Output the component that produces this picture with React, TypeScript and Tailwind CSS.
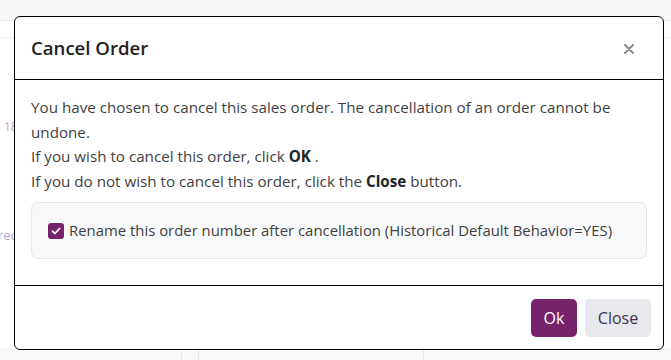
import React from "react";

export default function App() {
  return (
    <div
      className="relative w-[671px] h-[360px] overflow-hidden bg-white"
      style={{ fontFamily: "'Open Sans', Lato, sans-serif" }}
    >
      {/* faded page behind */}
      <div className="flex flex-col h-full">
        <div className="h-[21px] bg-[#f7f8f9] border-b border-[#ececec]" />
        <div className="h-[17px] border-b border-[#efefef]" />
        <div className="flex-1 relative">
          <div className="pt-[80px] pl-[4px] text-[12px] text-[#c7a3c2]">18</div>
          <div className="pt-[90px] -ml-[2px] text-[13px] text-[#b7a6cf]">rec</div>
        </div>
        <div className="h-[12px] bg-[#f8f9fa] flex">
          <div className="w-[182px] border-r border-[#e6e6e6]" />
          <div className="w-[17px] border-r border-[#e6e6e6]" />
          <div className="w-[225px] border-r border-[#e6e6e6]" />
        </div>
      </div>

      {/* modal */}
      <div className="absolute left-[14px] top-[16px] w-[650px] h-[334px] bg-white border border-black rounded-[6px] flex flex-col">
        <div className="h-[63px] border-b border-black flex items-center justify-between pl-[16px] pr-[29px]">
          <div className="text-[18.6px] font-semibold text-[#222]">Cancel Order</div>
          <svg width="10" height="10" viewBox="0 0 10 10" className="mt-[1px]">
            <path d="M1 1 L9 9 M9 1 L1 9" stroke="#8a8a8a" strokeWidth="2" strokeLinecap="round" />
          </svg>
        </div>
        <div className="h-[206px] border-b border-black pt-[15px] px-[16px] text-[15.2px] leading-[24.5px] text-[#3f3f3f]">
          <p>
            You have chosen to cancel this sales order. The cancellation of an order cannot be undone.
          </p>
          <p>
            If you wish to cancel this order, click <b className="font-bold text-[#222]">OK</b> .
          </p>
          <p>
            If you do not wish to cancel this order, click the <b className="font-bold text-[#222]">Close</b> button.
          </p>
          <div className="mt-[9px] h-[57px] bg-[#f8f9fb] border border-[#e6e7ea] rounded-[7px] flex items-center pl-[16px] gap-[5px]">
            <span className="w-[16px] h-[16px] rounded-[3px] bg-[#76236b] flex items-center justify-center shrink-0">
              <svg width="10" height="8" viewBox="0 0 10 8">
                <path d="M1.5 4.2 L4 6.5 L8.5 1.5" fill="none" stroke="white" strokeWidth="1.8" strokeLinecap="round" strokeLinejoin="round" />
              </svg>
            </span>
            <span className="text-[14.9px] text-[#3f3f3f] whitespace-nowrap">
              Rename this order number after cancellation (Historical Default Behavior=YES)
            </span>
          </div>
        </div>
        <div className="flex-1 flex items-center justify-end gap-[8px] pr-[12px]">
          <button className="w-[46px] h-[38px] rounded-[5px] bg-[#76236b] text-white text-[16px]">Ok</button>
          <button className="w-[66px] h-[38px] rounded-[5px] bg-[#e8e9ed] text-[#3a3350] text-[16px]">Close</button>
        </div>
      </div>
    </div>
  );
}
